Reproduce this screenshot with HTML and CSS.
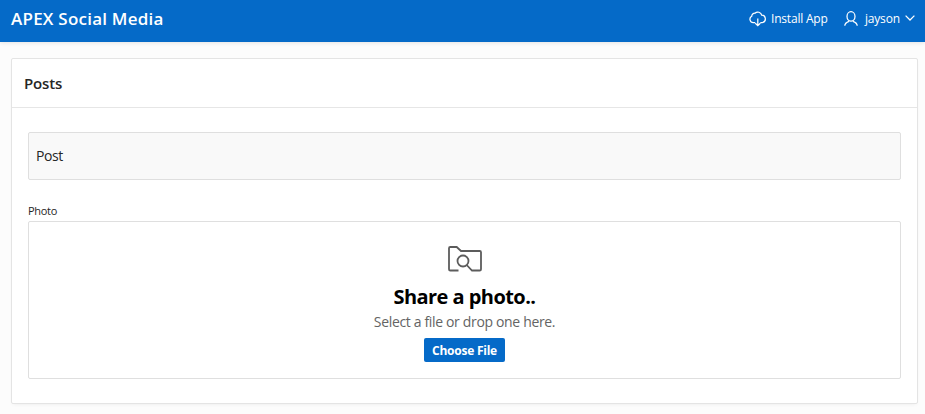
FILE: index.html
```html
<!DOCTYPE html>
<html lang="en">
<head>
<meta charset="utf-8">
<title>APEX Social Media</title>
<link rel="stylesheet" href="styles.css">
</head>
<body>
<header class="header">
  <h1 class="brand">APEX Social Media</h1>
  <nav class="nav">
    <a class="nav-item install">
      <svg class="icon-cloud" width="18" height="16" viewBox="0 0 18 16"><path d="M6.200 11.500H4.400a3.300 3.300 0 0 1-1.700-6.200A3.200 3.200 0 0 1 6 2.200A4 4 0 0 1 12.700 4.200A3.700 3.700 0 0 1 13.500 11.500H11.300M8.800 7.500V14.500M6.300 12.200L8.800 14.600L11.300 12.200"/></svg>
      <span class="install-label">Install App</span>
    </a>
    <a class="nav-item user">
      <svg class="icon-user" width="14" height="16" viewBox="0 0 14 16"><ellipse cx="7" cy="5.400" rx="4" ry="4.700"/><path d="M.8 14.800C.8 12.200 2 11.500 5 10.400M13.200 14.800C13.200 12.200 12 11.500 9 10.400"/></svg>
      <span class="user-label">jayson</span>
      <svg class="icon-caret" width="10" height="6" viewBox="0 0 10 6"><path d="M.6.600L5 5L9.400.600"/></svg>
    </a>
  </nav>
</header>
<main class="card">
  <h2 class="card-title"><span>Posts</span></h2>
  <div class="card-body">
    <div class="post-field"><span>Post</span></div>
    <div class="photo-label"><span>Photo</span></div>
    <div class="dropzone">
      <svg class="icon-folder" width="34" height="26" viewBox="0 0 34 26"><path d="M10.500 24.500H2.300Q1 24.500 1 23.200V2.300Q1 1 2.300 1H8.700L13 5H31.700Q33 5 33 6.300V23.200Q33 24.500 31.700 24.500H24L18.700 19"/><circle cx="15" cy="15" r="5.500"/></svg>
      <div class="drop-title"><span>Share a photo..</span></div>
      <div class="drop-text"><span>Select a file or drop one here.</span></div>
      <button class="choose"><span>Choose File</span></button>
    </div>
  </div>
</main>
</body>
</html>
```
FILE: styles.css
```css
* { box-sizing: border-box; }
body {
  margin: 0;
  height: 414px;
  overflow: hidden;
  background: #fcfcfc;
  color: #262626;
  font-family: "Open Sans", "Noto Sans", sans-serif;
}
svg { display: block; fill: none; stroke: #fff; stroke-width: 1.25; flex: none; }
.header {
  height: 42px;
  padding: 0 10px 4px 11px;
  display: flex;
  align-items: center;
  justify-content: space-between;
  background: #056ac8;
  color: #fff;
  box-shadow: 0 1px 4px rgba(0, 0, 0, .1);
}
.brand { margin: 0; font-size: 17px; line-height: 24px; font-weight: 600; letter-spacing: .23px; }
.nav { display: flex; gap: 16px; font-size: 12px; line-height: 16px; }
.nav-item { display: flex; align-items: center; }
.icon-cloud { margin-right: 4px; }
.install-label { width: 57px; white-space: nowrap; letter-spacing: -.2px; }
.icon-user { margin-right: 7px; }
.user-label { width: 35px; letter-spacing: -.2px; }
.icon-caret { margin-left: 5px; margin-bottom: 2px; }
.card {
  height: 346px;
  margin: 16px 7px 0 11px;
  border: 1px solid #e4e4e4;
  border-radius: 2px;
  background: #fff;
  box-shadow: 0 2px 4px -2px rgba(0, 0, 0, .08);
}
.card-title {
  height: 49px;
  margin: 0;
  padding: 11px 12px;
  border-bottom: 1px solid #e6e6e6;
  font-size: 15px;
  line-height: 26px;
  font-weight: 600;
  letter-spacing: -.15px;
}
.card-body { padding: 24px 16px; }
.post-field {
  height: 48px;
  padding: 0 7px;
  border: 1px solid #dfdfdf;
  border-radius: 2px;
  background: #f9f9f9;
  font-size: 14px;
  line-height: 46px;
  letter-spacing: -.4px;
}
.photo-label { margin-top: 23px; height: 18px; font-size: 11px; line-height: 16px; letter-spacing: -.3px; }
.dropzone {
  height: 158px;
  padding-top: 24px;
  display: flex;
  flex-direction: column;
  align-items: center;
  border: 1px solid #dfdfdf;
  border-radius: 2px;
}
.icon-folder { stroke: #5c5c5c; stroke-width: 1.8; }
.drop-title { margin-top: 11px; color: #000; font-size: 20px; line-height: 28px; font-weight: 700; letter-spacing: -.55px; }
.drop-text { margin-top: 1px; color: #646464; font-size: 14px; line-height: 20px; letter-spacing: -.34px; }
.choose {
  width: 81px;
  height: 24px;
  margin-top: 6px;
  padding: 1px 0 0;
  border: 0;
  border-radius: 2px;
  background: #056ac8;
  color: #fff;
  font: 700 12px/23px "Open Sans", "Noto Sans", sans-serif;
  letter-spacing: -.25px;
  white-space: nowrap;
}
```
